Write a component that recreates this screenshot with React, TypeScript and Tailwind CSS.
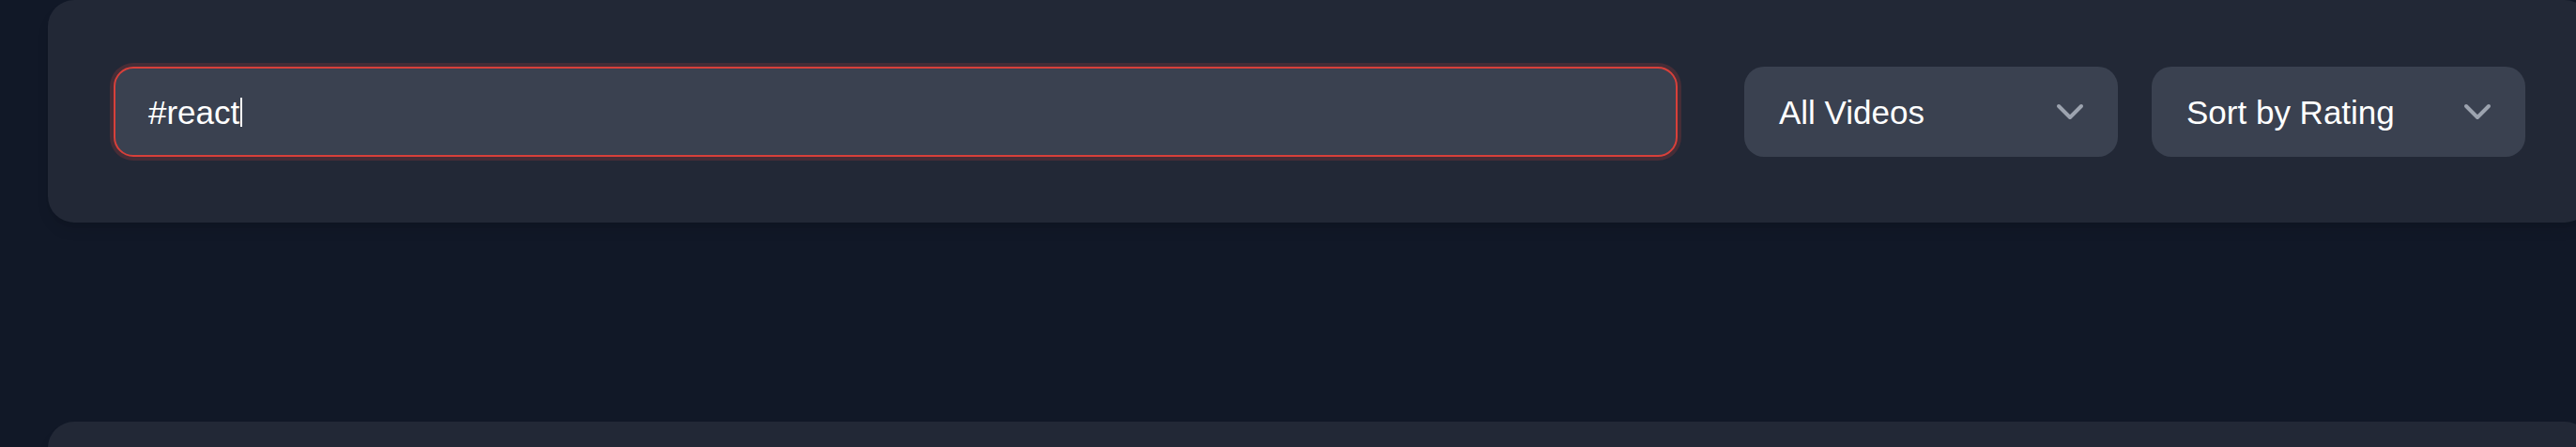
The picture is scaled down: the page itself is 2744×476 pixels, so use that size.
import { ChevronDown } from "lucide-react";

const SelectBox = ({ label }: { label: string }) => {
  return (
    <div className="flex items-center justify-between w-[398px] h-[96px] rounded-[21px] bg-[#3a4150] pl-[37px] pr-[27px] cursor-pointer">
      <span className="text-[35px] text-white leading-none">{label}</span>
      <ChevronDown size={48} strokeWidth={2} className="text-[#9ca3af]" />
    </div>
  );
};

export default function App() {
  return (
    <div className="w-full h-[476px] overflow-hidden bg-[#111827] font-['Liberation_Sans',Arial,sans-serif]">
      <div className="ml-[51px] w-[2709px] rounded-b-[28px] rounded-t-[28px] bg-[#222836] pt-[71px] pb-[70px] px-[70px] shadow-lg">
        <div className="flex items-center">
          <div className="flex-1 flex items-center h-[96px] rounded-[21px] border-2 border-[#d8403a] ring-[4px] ring-[#d8403a]/20 bg-[#3a4150] pl-[35px]">
            <span className="text-[35px] text-white leading-none">#react</span>
            <span className="inline-block w-[2px] h-[31px] bg-white ml-[1px]"></span>
          </div>

          <div className="ml-[71px] flex gap-[36px]">
            <SelectBox label="All Videos" />
            <SelectBox label="Sort by Rating" />
          </div>
        </div>
      </div>

      <div className="mt-[212px] ml-[51px] w-[2709px] h-[300px] rounded-[28px] bg-[#222836] shadow-lg"></div>
    </div>
  );
}
